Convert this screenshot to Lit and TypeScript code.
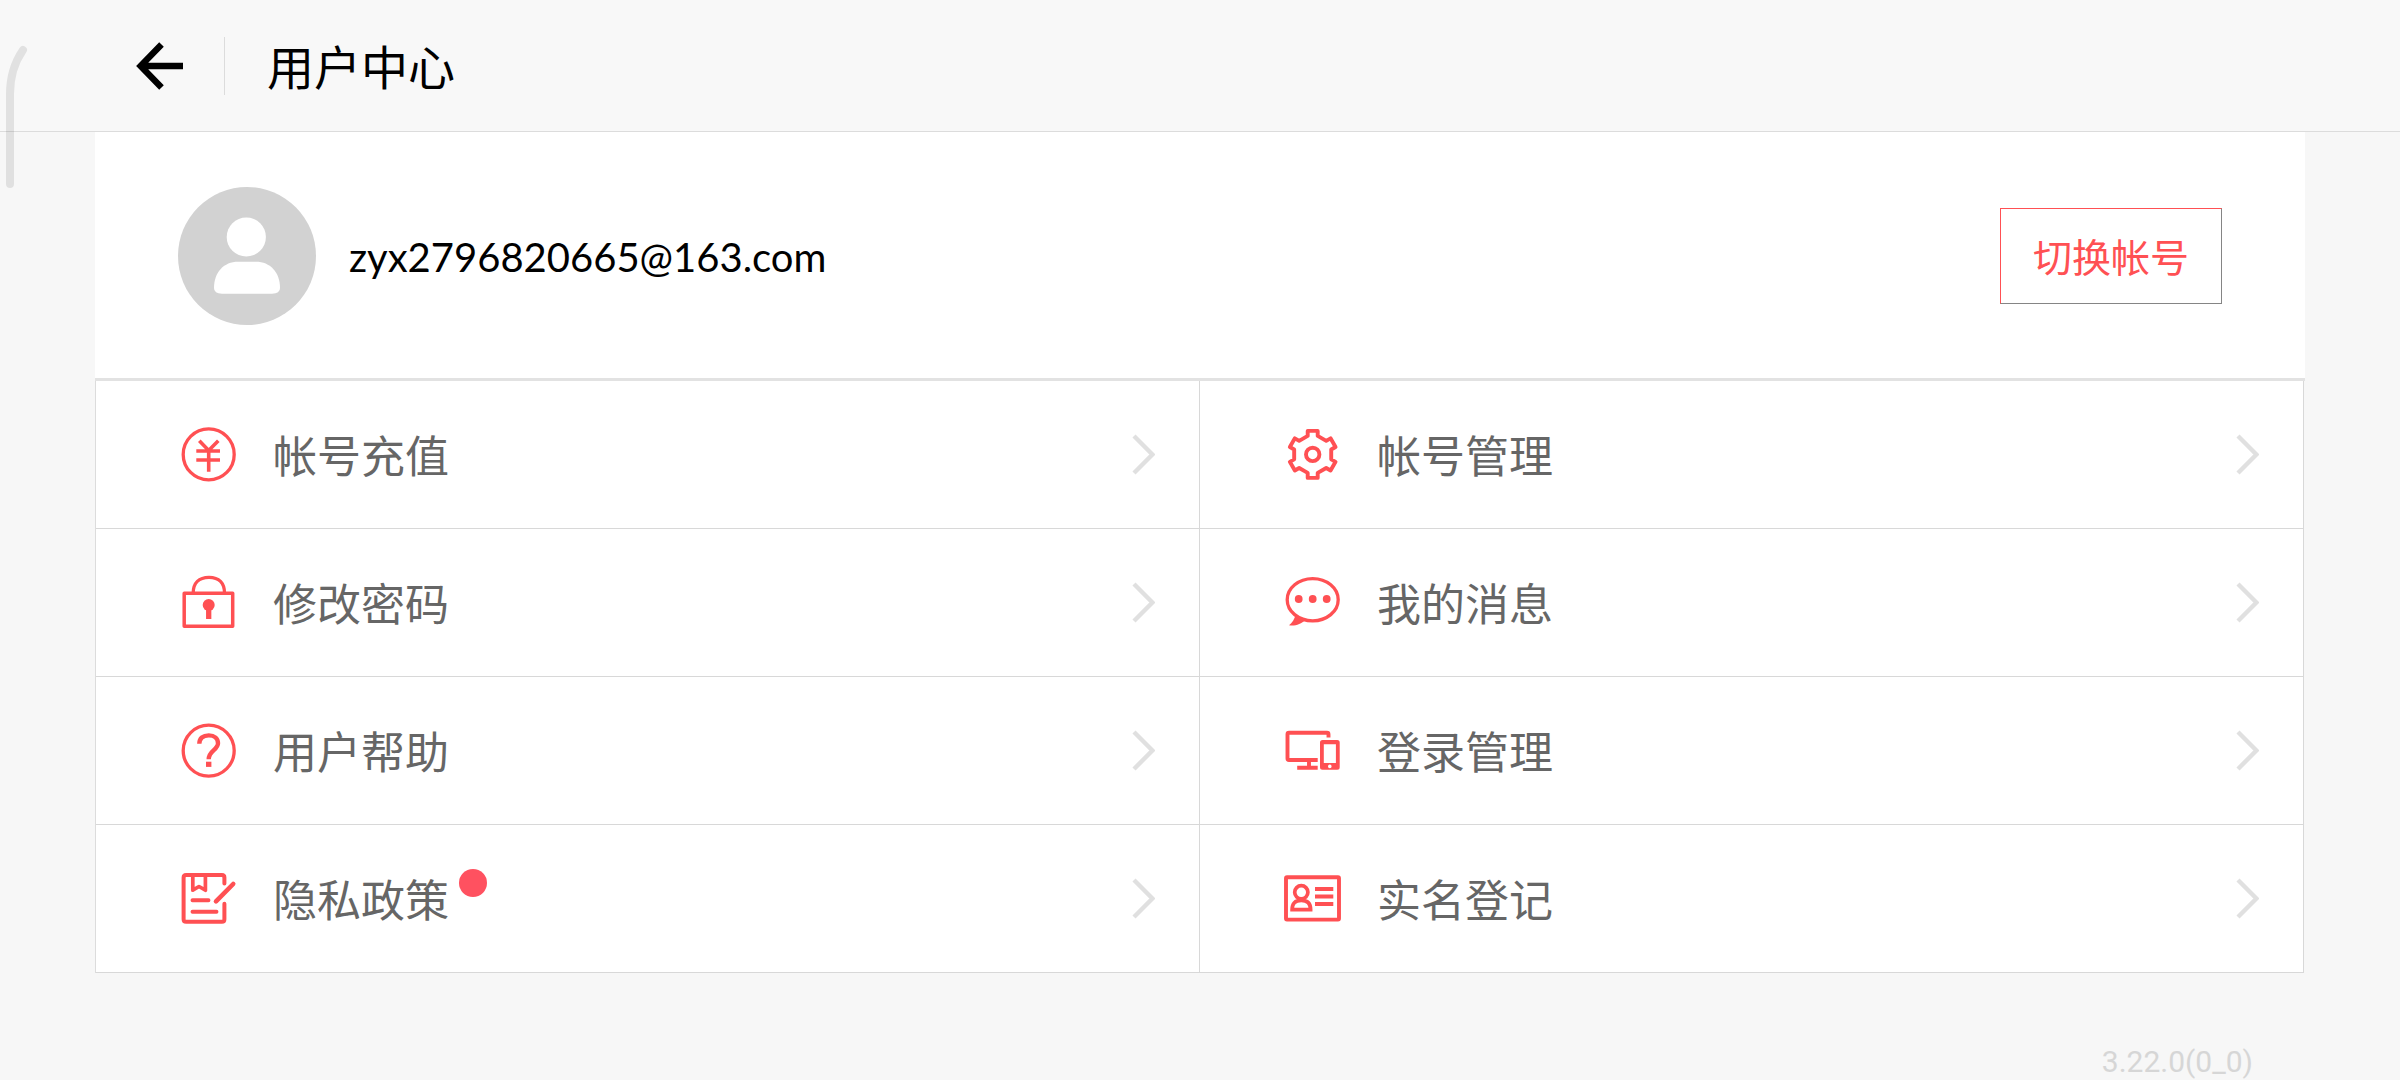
import { LitElement, html, css, svg, nothing, type SVGTemplateResult } from "lit";
import { customElement, property } from "lit/decorators.js";

interface MenuEntry {
  icon: string;
  label: string;
  unread?: boolean;
}

const MENU: MenuEntry[] = [
  { icon: "recharge", label: "帐号充值" },
  { icon: "gear", label: "帐号管理" },
  { icon: "lock", label: "修改密码" },
  { icon: "message", label: "我的消息" },
  { icon: "help", label: "用户帮助" },
  { icon: "devices", label: "登录管理" },
  { icon: "policy", label: "隐私政策", unread: true },
  { icon: "idcard", label: "实名登记" },
];

/* Gear outline: one tooth rotated six times round the centre. */
const gearPoints = (): string => {
  const tooth = [
    [-5, -18.5],
    [-5, -23.5],
    [5, -23.5],
    [5, -18.5],
  ];
  const points: string[] = [];
  for (let i = 0; i < 6; i++) {
    const a = (i * Math.PI) / 3;
    for (const [x, y] of tooth) {
      const px = 27.7 + x * Math.cos(a) - y * Math.sin(a);
      const py = 27.4 + x * Math.sin(a) + y * Math.cos(a);
      points.push(`${px.toFixed(2)},${py.toFixed(2)}`);
    }
  }
  return points.join(" ");
};

const ICONS: Record<string, SVGTemplateResult> = {
  recharge: svg`
    <circle cx="27.7" cy="27.4" r="25.5" stroke-width="3.3"/>
    <path d="M18.3 13.7 27.7 23.5 37.3 13.7M15.3 24H39M15.3 33H39M27.7 23V44.7" stroke-width="3.6"/>`,
  gear: svg`
    <polygon points=${gearPoints()} stroke-width="3.9" stroke-linejoin="round"/>
    <circle cx="27.7" cy="27.4" r="6.7" stroke-width="3.9"/>`,
  lock: svg`
    <rect x="3.2" y="18.2" width="48.5" height="33" stroke-width="3.5" stroke-linejoin="round"/>
    <path d="M12.2 18C12.2 8 18 2.3 28 2.3S43.5 8 43.5 18" stroke-width="3.3"/>
    <circle class="solid" cx="27.7" cy="30" r="6"/>
    <path d="M27.7 32V44" stroke-width="5.3"/>`,
  message: svg`
    <ellipse cx="27.7" cy="24.7" rx="25.5" ry="21.1" stroke-width="3.3"/>
    <path class="solid" d="M10.5 39.5C9.8 44 7 48 4 50.2 10 51.6 16 48.5 20.5 45.2Z"/>
    <circle class="solid" cx="13.7" cy="24" r="3.9"/>
    <circle class="solid" cx="27.7" cy="24" r="3.9"/>
    <circle class="solid" cx="41.7" cy="24" r="3.9"/>`,
  help: svg`
    <circle cx="27.7" cy="27.6" r="25.5" stroke-width="3.3"/>
    <path d="M18.3 20.8C18.3 15.3 22 12.4 27.8 12.4S37 15.6 37 20.3C37 27 27.7 27.6 27.7 36.3" stroke-width="4.4"/>
    <path d="M27.7 38.7V43.9" stroke-width="5.4"/>`,
  devices: svg`
    <path d="M43.5 14.5V11.3Q43.5 9.8 42 9.8H4Q2.5 9.8 2.5 11.3V35.5Q2.5 37 4 37H32.7" stroke-width="3.9"/>
    <path d="M24 37V44.7M12.2 44.7H32.7" stroke-width="3.9"/>
    <path class="solid" fill-rule="evenodd" d="M37.5 17H52.2Q54.7 17 54.7 19.5V44.2Q54.7 46.7 52.2 46.7H37.5Q35 46.7 35 44.2V19.5Q35 17 37.5 17ZM38.8 21.2V40H50.9V21.2ZM44.8 41.6A1.8 1.8 0 1 0 44.8 45.2 1.8 1.8 0 1 0 44.8 41.6Z"/>`,
  policy: svg`
    <path d="M43.4 12.5V6.4Q43.4 3.9 40.9 3.9H5.1Q2.6 3.9 2.6 6.4V48.3Q2.6 50.8 5.1 50.8H40.9Q43.4 50.8 43.4 48.3V32.8" stroke-width="4" stroke-linecap="round"/>
    <path d="M11.8 4V19.2L18 15.5 24.4 19.2V4" stroke-width="3.7" stroke-linejoin="round"/>
    <path d="M11.5 29.3H27.5M11.5 40.7H35.5" stroke-width="3.9" stroke-linecap="round"/>
    <path d="M35 30.4 52.2 13" stroke-width="4.6" stroke-linecap="round"/>`,
  idcard: svg`
    <rect x="1" y="6.2" width="53" height="42.4" rx="1" stroke-width="3.9"/>
    <circle cx="16.3" cy="21.3" r="6.6" stroke-width="3.7"/>
    <path d="M7.1 38.6C7.1 32.5 10 29.4 16.3 29.4S25.6 32.5 25.6 38.6Z" stroke-width="3.7"/>
    <path d="M30 18H48.3M30 25.5H48.3M30 33H48.3" stroke-width="3.9"/>`,
};

@customElement("menu-entry")
export class MenuEntryElement extends LitElement {
  @property() icon = "";
  @property() label = "";
  @property({ type: Boolean }) unread = false;

  static styles = css`
    :host {
      display: block;
    }
    .entry {
      display: flex;
      align-items: center;
      gap: 37px;
      height: 147px;
      padding: 0 44px 0 85px;
      color: #666;
      text-decoration: none;
    }
    .icon {
      flex: none;
      width: 55px;
      height: 55px;
      overflow: visible;
      fill: none;
      stroke: #ff5053;
    }
    .solid {
      fill: #ff5053;
      stroke: none;
    }
    .label {
      position: relative;
      padding-top: 2px;
      font-size: 44px;
      line-height: 64px;
      white-space: nowrap;
    }
    .dot {
      position: absolute;
      left: calc(100% + 10px);
      top: 3px;
      width: 28px;
      height: 28px;
      border-radius: 50%;
      background: #ff5160;
    }
    .chevron {
      flex: none;
      width: 24px;
      height: 44px;
      margin-left: auto;
      fill: none;
      stroke: #e0e0e0;
      stroke-width: 4.4;
    }
  `;

  render() {
    return html`<a class="entry" href="#">
      <svg class="icon" viewBox="0 0 55 55" aria-hidden="true">${ICONS[this.icon]}</svg>
      <span class="label">${this.label}${this.unread ? html`<i class="dot"></i>` : nothing}</span>
      <svg class="chevron" viewBox="0 0 24 44" aria-hidden="true"><path d="M3 3 21.400 21.500 3 40"/></svg>
    </a>`;
  }
}

@customElement("app-root")
export class AppRoot extends LitElement {
  static styles = css`
    :host {
      display: flex;
      flex-direction: column;
      box-sizing: border-box;
      min-height: 100vh;
      position: relative;
      overflow: hidden;
      background: #f7f7f7;
      color: #000;
      font-family: Lato, "Noto Sans CJK SC", sans-serif;
    }
    .header {
      display: flex;
      align-items: center;
      height: 131px;
      padding-left: 135px;
      border-bottom: 1px solid #dcdcdc;
      background: #f8f8f8;
    }
    .back {
      display: flex;
      padding: 0;
      border: 0;
      background: none;
    }
    .arrow {
      width: 50px;
      height: 50px;
      fill: none;
      stroke: #000;
      stroke-width: 6.4;
    }
    .divider {
      width: 1px;
      height: 58px;
      margin: 0 42px 0 39px;
      background: #dcdcdc;
    }
    .title {
      margin: 0;
      padding-top: 2px;
      font-size: 47px;
      line-height: 70px;
      font-weight: 400;
    }
    .content {
      margin: 0 95px;
    }
    .profile {
      display: flex;
      align-items: center;
      gap: 33px;
      padding: 55px 83px 53px;
      border-bottom: 3px solid #e2e2e2;
      background: #fff;
    }
    .avatar {
      flex: none;
      width: 138px;
      height: 138px;
    }
    .avatar-bg {
      fill: #d2d2d2;
    }
    .avatar-person {
      fill: #fff;
    }
    .email {
      padding-top: 2px;
      font-size: 40px;
      line-height: 56px;
    }
    .switch {
      box-sizing: border-box;
      height: 96px;
      margin-left: auto;
      padding: 2px 32px 0;
      border: 1px solid;
      border-color: #ff5053 #858585 #858585 #ff5053;
      background: #fff;
      color: #ff5053;
      font-family: inherit;
      font-size: 39px;
      line-height: 56px;
    }
    .menu {
      display: grid;
      grid-template-columns: 1fr 1fr;
      margin: 0 1px 0 0;
      padding: 0;
      border-left: 1px solid #dcdcdc;
      background: #fff;
      list-style: none;
    }
    .cell {
      border-right: 1px solid #d8d8d8;
      border-bottom: 1px solid #d8d8d8;
    }
    .footer {
      margin-top: auto;
      padding: 0 147px 0 0;
      color: #d6d6d6;
      font-family: Roboto, sans-serif;
      font-size: 30px;
      line-height: 36px;
      text-align: right;
    }
    .edge {
      position: absolute;
      left: 0;
      top: 40px;
      width: 32px;
      height: 152px;
      fill: none;
      stroke: #000;
      stroke-opacity: 0.09;
      stroke-width: 8;
      stroke-linecap: round;
      pointer-events: none;
    }
  `;

  render() {
    return html`
      <header class="header">
        <button class="back" type="button" aria-label="返回">
          <svg class="arrow" viewBox="0 0 50 50" aria-hidden="true">
            <path d="M26.5 3.5 5.6 25 26.5 46.5M6 25H48"/>
          </svg>
        </button>
        <span class="divider"></span>
        <h1 class="title">用户中心</h1>
      </header>
      <main class="content">
        <section class="profile">
          <svg class="avatar" viewBox="0 0 138 138" aria-hidden="true">
            <circle class="avatar-bg" cx="69" cy="69" r="69"/>
            <circle class="avatar-person" cx="68.3" cy="50" r="19.6"/>
            <path class="avatar-person" d="M36 101C36 85 46 74.7 60 74.7H78C92 74.7 102 85 102 101Q102 106.7 94 106.7H44Q36 106.7 36 101Z"/>
          </svg>
          <span class="email">zyx2796820665@163.com</span>
          <button class="switch" type="button">切换帐号</button>
        </section>
        <ul class="menu">
          ${MENU.map(
            (m) => html`<li class="cell">
              <menu-entry .icon=${m.icon} .label=${m.label} .unread=${!!m.unread}></menu-entry>
            </li>`
          )}
        </ul>
      </main>
      <footer class="footer">3.22.0(0_0)</footer>
      <svg class="edge" viewBox="0 0 32 152" aria-hidden="true">
        <path d="M23 10C14 23 10 36 10 54V144"/>
      </svg>
    `;
  }
}
